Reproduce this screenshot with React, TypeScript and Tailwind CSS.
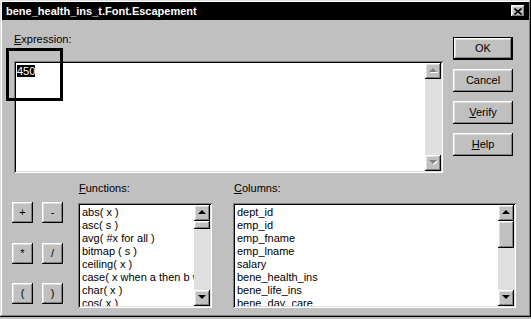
import React from "react";

const raised =
  "bg-[#c0c0c0] shadow-[inset_-1px_-1px_#000,inset_1px_1px_#fff,inset_-2px_-2px_#808080,inset_2px_2px_#dfdfdf]";
const sunken =
  "bg-white shadow-[inset_1px_1px_#808080,inset_-1px_-1px_#fff,inset_2px_2px_#000,inset_-2px_-2px_#dfdfdf]";

function Arrow({ dir, disabled }: { dir: "up" | "down"; disabled?: boolean }) {
  const pts = dir === "up" ? "4,0 8,4 0,4" : "0,0 8,0 4,4";
  return (
    <div className={`${raised} w-[16px] h-[16px] flex items-center justify-center shrink-0`}>
      <svg width="9" height="6" viewBox="0 0 9 6">
        {disabled && (
          <polygon points={pts} transform="translate(1,1)" fill="#fff" />
        )}
        <polygon points={pts} fill={disabled ? "#808080" : "#000"} />
      </svg>
    </div>
  );
}

function ScrollBar({ thumb, disabled }: { thumb?: number; disabled?: boolean }) {
  return (
    <div className="w-[16px] h-full flex flex-col bg-[#e0e0e0] shrink-0">
      <Arrow dir="up" disabled={disabled} />
      {thumb ? <div className={`${raised} w-[16px] shrink-0`} style={{ height: thumb }} /> : null}
      <div className="flex-1" />
      <Arrow dir="down" disabled={disabled} />
    </div>
  );
}

function Btn({ children, def }: { children: React.ReactNode; def?: boolean }) {
  if (def) {
    return (
      <div className="w-[60px] h-[23px] border border-black">
        <div className={`${raised} w-full h-full flex items-center justify-center`}>{children}</div>
      </div>
    );
  }
  return (
    <div className={`${raised} w-[60px] h-[23px] flex items-center justify-center`}>{children}</div>
  );
}

function OpBtn({ children }: { children: React.ReactNode }) {
  return (
    <div className={`${raised} w-[21px] h-[21px] flex items-center justify-center text-[11px]`}>
      {children}
    </div>
  );
}

function ListBox({
  items,
  width,
  thumb,
}: {
  items: string[];
  width: number;
  thumb: number;
}) {
  return (
    <div className={`${sunken} h-[105px] p-[2px] flex`} style={{ width }}>
      <div className="flex-1 overflow-hidden pl-[2px] pt-[1px] whitespace-nowrap">
        {items.map((it) => (
          <div key={it} className="h-[13px] leading-[13px]">
            {it}
          </div>
        ))}
      </div>
      <ScrollBar thumb={thumb} />
    </div>
  );
}

export default function App() {
  const functions = [
    "abs( x )",
    "asc( s )",
    "avg( #x for all )",
    "bitmap ( s )",
    "ceiling( x )",
    "case( x when a then b when c then d else e )",
    "char( x )",
    "cos( x )",
  ];
  const columns = [
    "dept_id",
    "emp_id",
    "emp_fname",
    "emp_lname",
    "salary",
    "bene_health_ins",
    "bene_life_ins",
    "bene_day_care",
  ];
  return (
    <div className="w-[531px] h-[319px] bg-[#c0c0c0] font-['Liberation_Sans',Arial,sans-serif] text-[11px] leading-[13px] text-black">
      <div className="relative w-[531px] h-[317px] p-[2px] flex flex-col shadow-[inset_-1px_-1px_#000,inset_1px_1px_#dfdfdf,inset_-2px_-2px_#808080,inset_2px_2px_#fff]">
        {/* Title bar */}
        <div className="h-[18px] bg-black flex items-center justify-between pl-[4px] pr-[4px] shrink-0">
          <span className="text-white font-bold text-[11px] leading-[13px]">
            bene_health_ins_t.Font.Escapement
          </span>
          <div className={`${raised} w-[14px] h-[12px] flex items-center justify-center`}>
            <svg width="8" height="7" viewBox="0 0 8 7">
              <path d="M0.5 0.5 L7.5 6.5 M7.5 0.5 L0.5 6.5" stroke="#000" strokeWidth="1.6" />
            </svg>
          </div>
        </div>

        {/* Top section */}
        <div className="flex shrink-0">
          <div className="ml-[12px] w-[429px] flex flex-col">
            <div className="mt-[13px] h-[13px]">
              <span className="underline">E</span>xpression:
            </div>
            <div className={`${sunken} mt-[15px] h-[112px] p-[2px] flex`}>
              <div className="flex-1 pl-[1px] pt-[2px]">
                <span className="bg-black text-white">450</span>
              </div>
              <div className="h-full">
                <ScrollBar disabled />
              </div>
            </div>
          </div>
          <div className="ml-[10px] mt-[17px] flex flex-col gap-[9px]">
            <Btn def>OK</Btn>
            <Btn>Cancel</Btn>
            <Btn>
              <span>
                <span className="underline">V</span>erify
              </span>
            </Btn>
            <Btn>
              <span>
                <span className="underline">H</span>elp
              </span>
            </Btn>
          </div>
        </div>

        {/* Bottom section */}
        <div className="flex shrink-0">
          <div className="ml-[10px] mt-[29px] h-[102px] grid grid-cols-2 gap-x-[9px] content-between">
            <OpBtn>+</OpBtn>
            <OpBtn>-</OpBtn>
            <OpBtn>*</OpBtn>
            <OpBtn>/</OpBtn>
            <OpBtn>(</OpBtn>
            <OpBtn>)</OpBtn>
          </div>
          <div className="ml-[15px] flex flex-col">
            <div className="mt-[9px] h-[13px] pl-[1px]">
              <span className="underline">F</span>unctions:
            </div>
            <div className="mt-[8px]">
              <ListBox items={functions} width={134} thumb={8} />
            </div>
          </div>
          <div className="ml-[21px] flex flex-col">
            <div className="mt-[9px] h-[13px] pl-[1px]">
              <span className="underline">C</span>olumns:
            </div>
            <div className="mt-[8px]">
              <ListBox items={columns} width={283} thumb={27} />
            </div>
          </div>
        </div>

        {/* Annotation highlight */}
        <div className="absolute left-[6px] top-[48px] w-[57px] h-[53px] border-[3px] border-black" />
      </div>
    </div>
  );
}
